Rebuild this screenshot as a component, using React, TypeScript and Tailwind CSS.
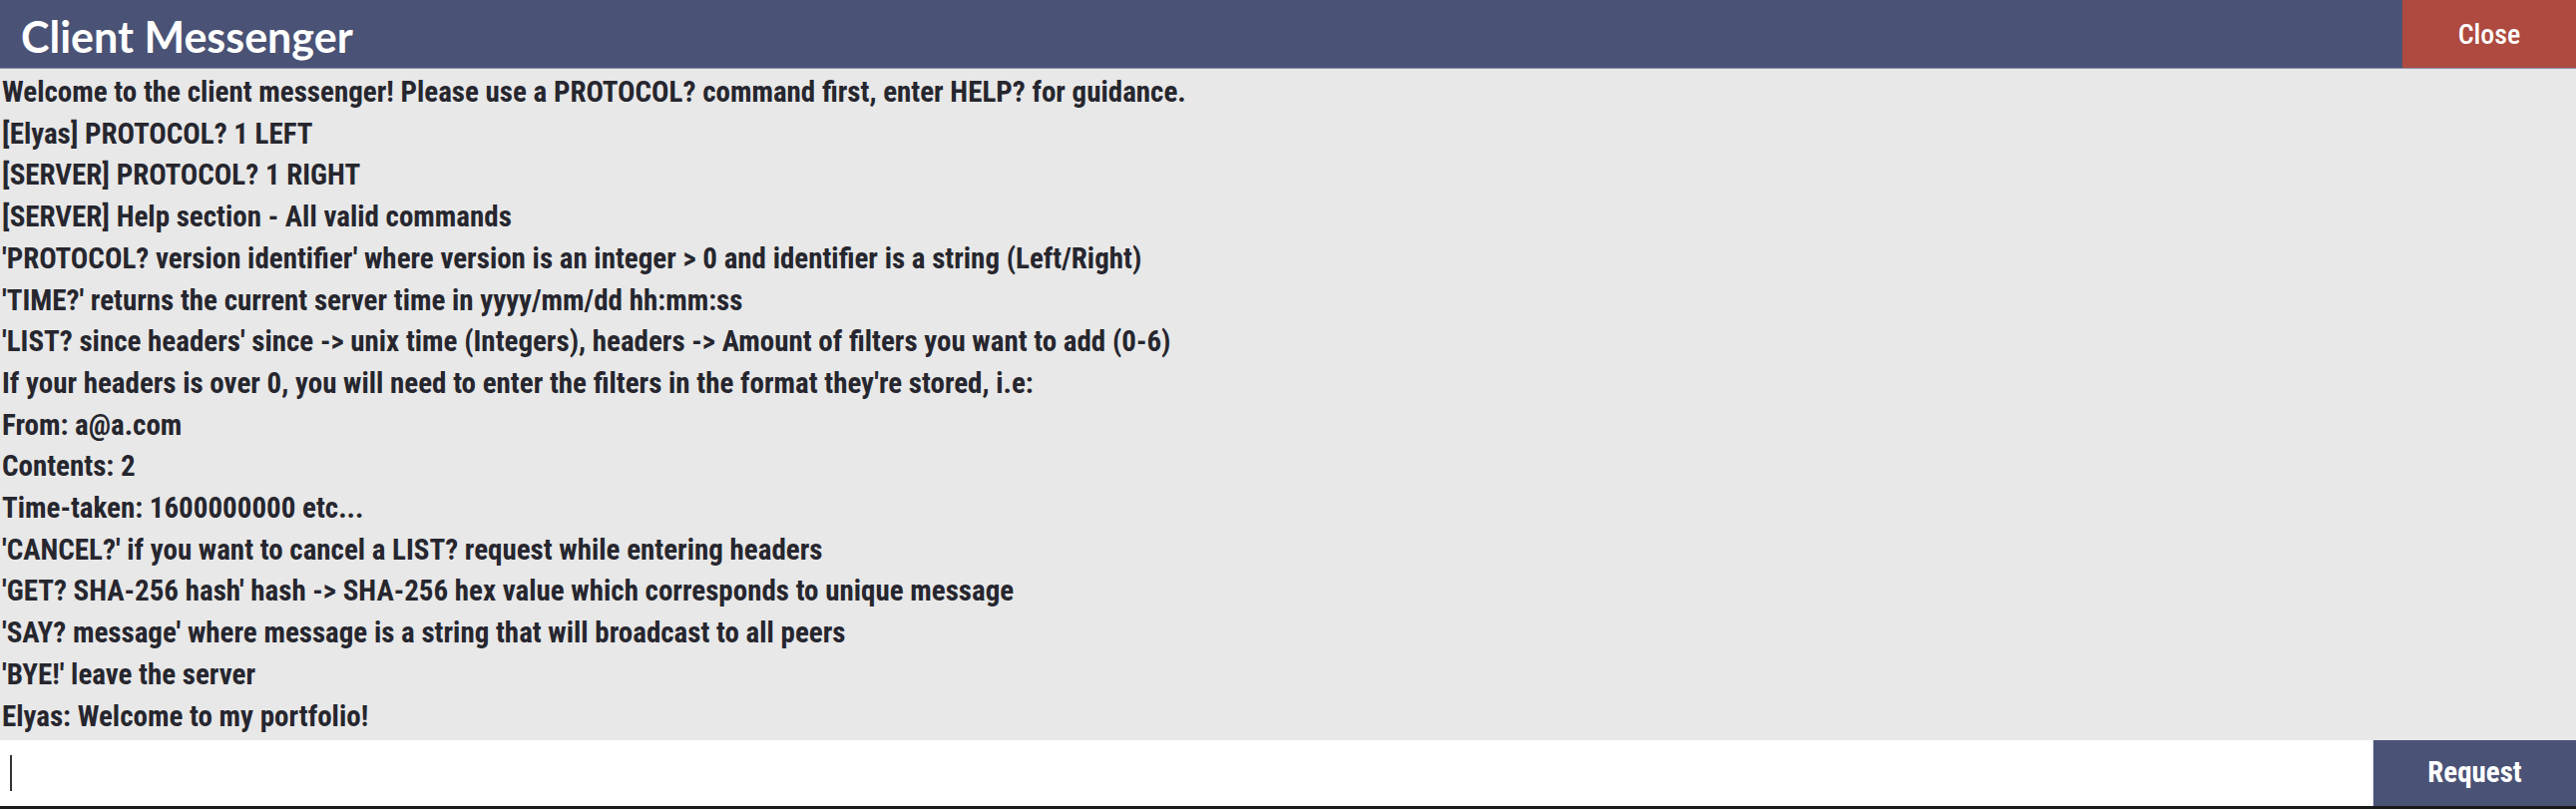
const lines = [
  'Welcome to the client messenger! Please use a PROTOCOL? command first, enter HELP? for guidance.',
  '[Elyas] PROTOCOL? 1 LEFT',
  '[SERVER] PROTOCOL? 1 RIGHT',
  '[SERVER] Help section - All valid commands',
  "'PROTOCOL? version identifier' where version is an integer > 0 and identifier is a string (Left/Right)",
  "'TIME?' returns the current server time in yyyy/mm/dd hh:mm:ss",
  "'LIST? since headers' since -> unix time (Integers), headers -> Amount of filters you want to add (0-6)",
  "If your headers is over 0, you will need to enter the filters in the format they're stored, i.e:",
  'From: a@a.com',
  'Contents: 2',
  'Time-taken: 1600000000 etc...',
  "'CANCEL?' if you want to cancel a LIST? request while entering headers",
  "'GET? SHA-256 hash' hash -> SHA-256 hex value which corresponds to unique message",
  "'SAY? message' where message is a string that will broadcast to all peers",
  "'BYE!' leave the server",
  'Elyas: Welcome to my portfolio!'
]

const App = () => {
  return (
    <div className="flex h-[811px] w-full flex-col bg-[#e8e8e8] font-['Roboto',sans-serif] font-stretch-condensed">
      <div className="flex h-[69px] flex-shrink-0 items-stretch border-b border-[#8a8fa8] bg-[#4a5275]">
        <h1 className="flex flex-1 items-center pl-[21px] pt-[6px] font-['Lato',sans-serif] text-[43px] font-bold text-white">
          Client Messenger
        </h1>
        <button className="w-[174px] bg-[#ae4a40] pt-[2px] text-[28px] font-medium text-white">Close</button>
      </div>

      <div className="flex-1 overflow-hidden pl-[2px] pt-[3px] text-[29px] leading-[41.7px] font-bold text-[#26262e]">
        {lines.map((line, i) => (
          <div key={i} className="whitespace-pre">
            {line}
          </div>
        ))}
      </div>

      <div className="flex h-[69px] flex-shrink-0 border-b-[3px] border-[#1a1a1a]">
        <div className="flex flex-1 items-center bg-white pl-[10px]">
          <div className="h-[36px] w-[2px] bg-[#333]" />
        </div>
        <button className="w-[204px] border-l border-[#e0e0e8] bg-[#4a5275] text-[29px] font-bold text-white">
          Request
        </button>
      </div>
    </div>
  )
}

export default App
